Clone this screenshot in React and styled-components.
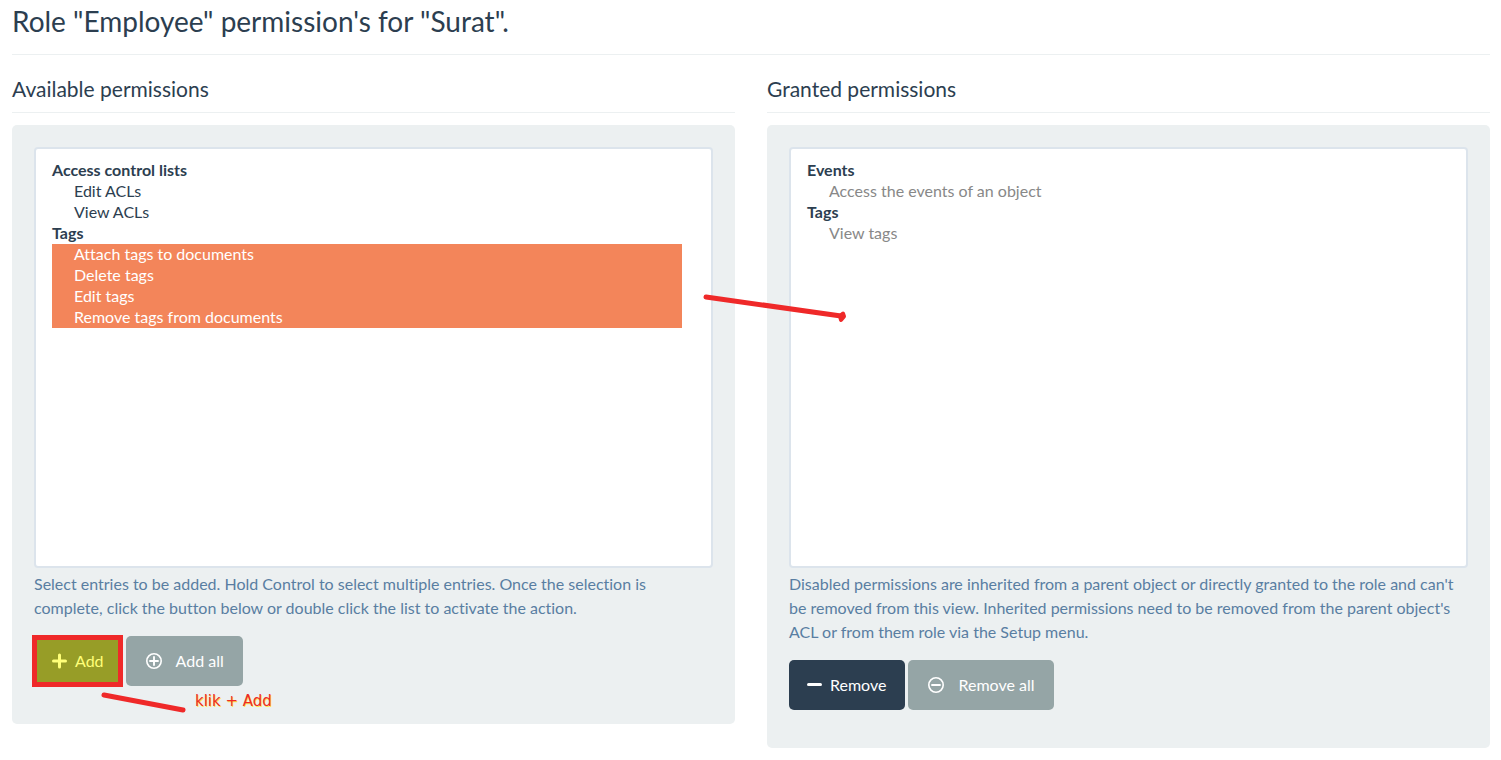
import styled, { createGlobalStyle } from 'styled-components'

const available = [
  { label: 'Access control lists', options: ['Edit ACLs', 'View ACLs'] },
  {
    label: 'Tags',
    options: ['Attach tags to documents', 'Delete tags', 'Edit tags', 'Remove tags from documents'],
  },
]

const granted = [
  { label: 'Events', options: ['Access the events of an object'] },
  { label: 'Tags', options: ['View tags'] },
]

const selected = available[1].options

export default function App() {
  return (
    <Page>
      <GlobalStyle />
      <Title>Role "Employee" permission's for "Surat".</Title>
      <Columns>
        <Column>
          <Heading id='available'>Available permissions</Heading>
          <Panel>
            <PermissionList
              labelledBy='available'
              describedBy='available-help'
              groups={available}
              defaultValue={selected}
            />
            <Help id='available-help'>
              Select entries to be added. Hold Control to select multiple entries. Once the selection is
              complete, click the button below or double click the list to activate the action.
            </Help>
            <Actions>
              <Button type='button' $marked><PlusIcon />Add</Button>
              <Button type='button' $muted><CircleIcon plus />Add all</Button>
              <Callout>
                <CalloutLine />
                <CalloutText>klik + Add</CalloutText>
              </Callout>
            </Actions>
          </Panel>
        </Column>
        <Column>
          <Heading id='granted'>Granted permissions</Heading>
          <Panel>
            <PermissionList
              labelledBy='granted'
              describedBy='granted-help'
              groups={granted}
              defaultValue={[]}
              disabledOptions
            />
            <Help id='granted-help'>
              Disabled permissions are inherited from a parent object or directly granted to the role and can't
              be removed from this view. Inherited permissions need to be removed from the parent object's
              ACL or from them role via the Setup menu.
            </Help>
            <Actions>
              <Button type='button'><MinusIcon />Remove</Button>
              <Button type='button' $muted><CircleIcon />Remove all</Button>
            </Actions>
          </Panel>
          <TransferArrow />
        </Column>
      </Columns>
    </Page>
  )
}

function PermissionList({ labelledBy, describedBy, groups, defaultValue, disabledOptions }) {
  return (
    <List multiple aria-labelledby={labelledBy} aria-describedby={describedBy} defaultValue={defaultValue}>
      { groups.map(group =>
        <optgroup key={group.label} label={group.label}>
          { group.options.map(option =>
            <option key={option} value={option} disabled={disabledOptions}>{option}</option>
          )}
        </optgroup>
      )}
    </List>
  )
}

function PlusIcon() {
  return (
    <Icon width='15' height='16' viewBox='0 0 15 16' $gap={8}>
      <path d='M7.5 2v12M1.5 8h12' strokeWidth='3' />
    </Icon>
  )
}

function MinusIcon() {
  return (
    <Icon width='15' height='16' viewBox='0 0 15 16' $gap={8}>
      <path d='M1.5 7.5h12' strokeWidth='3' />
    </Icon>
  )
}

function CircleIcon({ plus }) {
  return (
    <Icon width='20' height='18' viewBox='0 0 20 18' $gap={12}>
      <circle cx='10' cy='9' r='7.2' strokeWidth='1.6' />
      <path d={plus ? 'M10 5v8M6 9h8' : 'M6 9h8'} strokeWidth='1.9' />
    </Icon>
  )
}

function CalloutLine() {
  return (
    <Stroke width='86' height='24' viewBox='0 0 86 24'>
      <path d='M4 4L83 19' strokeWidth='5' />
    </Stroke>
  )
}

function TransferArrow() {
  return (
    <Arrow width='146' height='34' viewBox='0 0 146 34'>
      <path d='M4 6L139 25' strokeWidth='5' />
      <path d='M141 22.5l1 3l-3 3.5l-1-4z' strokeWidth='4' />
    </Arrow>
  )
}

const GlobalStyle = createGlobalStyle`
  * {
    box-sizing: border-box;
  }
  body {
    margin: 0;
    background: #fff;
    color: #2c3e50;
    font-family: Lato, sans-serif;
    font-size: 16px;
    font-variant-ligatures: none;
    line-height: 24px;
  }
`

const Page = styled.main`
  padding: 0 11px 12px 12px;
`

const Title = styled.h1`
  margin: 0 0 20px;
  padding: 3px 0 15px;
  border-bottom: 1px solid #ecf0f1;
  font-size: 28px;
  font-weight: 400;
  line-height: 36px;
`

const Columns = styled.div`
  display: grid;
  grid-template-columns: 1fr 1fr;
  gap: 32px;
  align-items: start;
`

const Column = styled.section`
  position: relative;
`

const Heading = styled.h2`
  margin: 0 0 12px;
  padding-bottom: 9px;
  border-bottom: 1px solid #ecf0f1;
  font-size: 21px;
  font-weight: 400;
  line-height: 28px;
`

const Panel = styled.div`
  padding: 22px 22px 38px;
  border-radius: 5px;
  background: #ecf0f1;
`

const List = styled.select`
  display: block;
  width: 100%;
  height: 421px;
  padding: 11px 29px 11px 14px;
  border: 2px solid #dce4ec;
  border-radius: 4px;
  outline: 0;
  overflow-y: auto;
  scrollbar-width: none;
  background: #fff;
  color: #2c3e50;
  font: inherit;

  optgroup {
    font-weight: 700;
  }
  option {
    height: 21px;
    min-height: 21px;
    margin-left: 2px;
    padding: 0 2px 0 22px;
    font-weight: 400;
    line-height: 21px;
  }
  option:first-of-type {
    margin-top: 1px;
  }
  option:disabled {
    color: #888;
  }
  option:checked {
    background-image: linear-gradient(#f3855a, #f3855a);
    -webkit-text-fill-color: #fff;
  }
`

const Help = styled.p`
  margin: 4px 0 16px;
  color: #597ea2;
`

const Actions = styled.div`
  position: relative;
  display: flex;
  gap: 3px;
`

const Button = styled.button`
  position: relative;
  display: flex;
  align-items: center;
  height: 50px;
  padding: 0 19px 0 18px;
  border: 0;
  border-radius: 5px;
  background: ${props => props.$marked ? '#979d27' : props.$muted ? '#95a5a6' : '#2c3e50'};
  color: ${props => props.$marked ? '#ffff79' : '#fff'};
  font: inherit;
  cursor: pointer;

  ${props => props.$marked && `
    &::after {
      content: '';
      position: absolute;
      inset: -1px 0 -1px -2px;
      border: 5px solid #ef2929;
    }
  `}
`

const Icon = styled.svg.attrs({ 'aria-hidden': true })`
  margin-right: ${props => props.$gap}px;
  fill: none;
  stroke: currentColor;
  stroke-linecap: round;
`

const Callout = styled.div`
  position: absolute;
  top: 55px;
  left: 66px;
  display: flex;
  gap: 9px;
`

const CalloutText = styled.span`
  color: #ef2929;
  font-family: 'DejaVu Sans', sans-serif;
  font-size: 15px;
  line-height: 20px;
  text-shadow: 1px 1px 0 #fce94f;
`

const Stroke = styled.svg.attrs({ 'aria-hidden': true })`
  fill: none;
  stroke: #ef2929;
  stroke-linecap: round;
  stroke-linejoin: round;
`

const Arrow = styled(Stroke)`
  position: absolute;
  top: 216px;
  left: -65px;
  pointer-events: none;
`
